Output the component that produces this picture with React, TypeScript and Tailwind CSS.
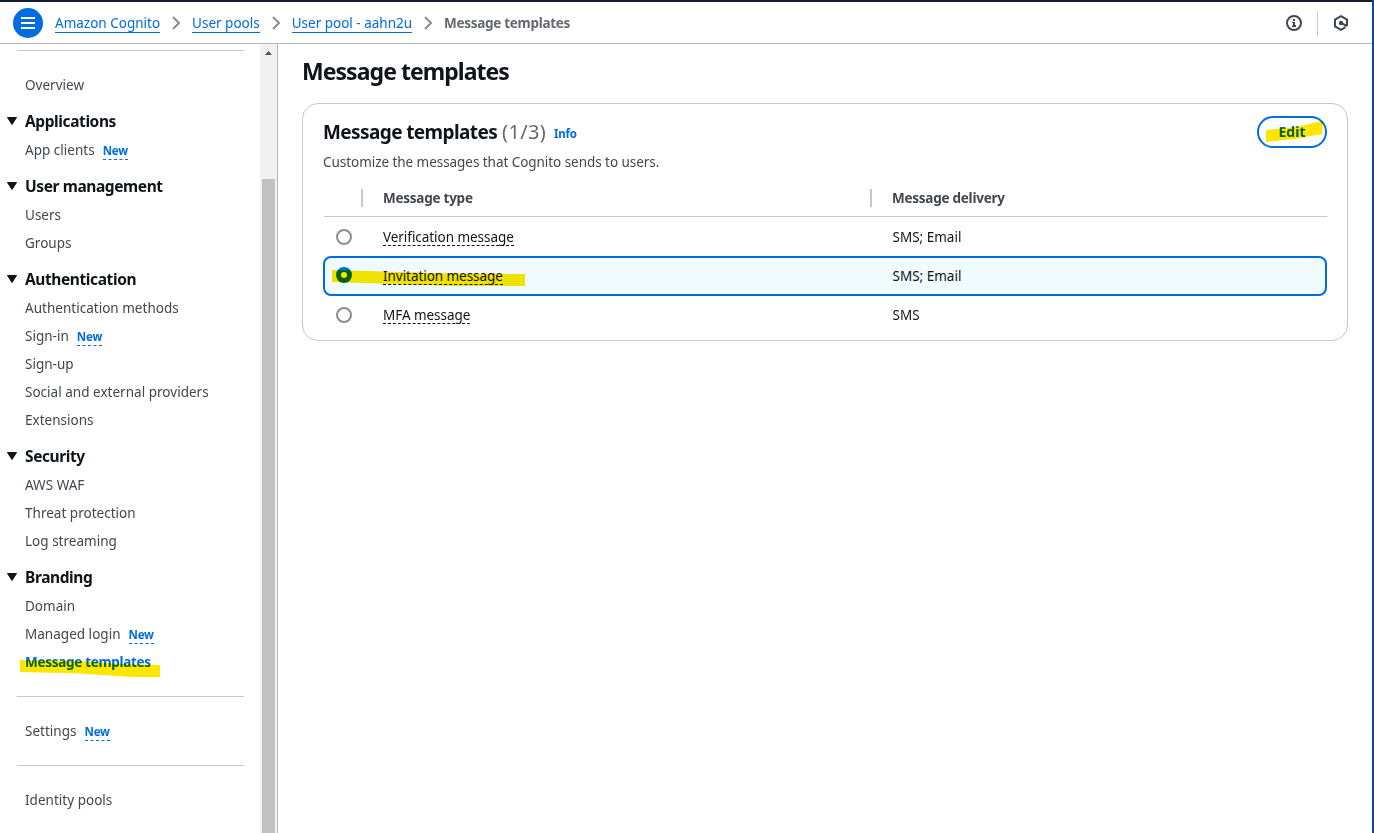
import { Fragment } from "react"

const topLinks = ["Amazon Cognito", "User pools", "User pool - aahn2u"]

const sections = [
  { title: "Applications", items: [{ label: "App clients", isNew: true }] },
  { title: "User management", items: [{ label: "Users" }, { label: "Groups" }] },
  {
    title: "Authentication",
    items: [
      { label: "Authentication methods" },
      { label: "Sign-in", isNew: true },
      { label: "Sign-up" },
      { label: "Social and external providers" },
      { label: "Extensions" },
    ],
  },
  {
    title: "Security",
    items: [{ label: "AWS WAF" }, { label: "Threat protection" }, { label: "Log streaming" }],
  },
  {
    title: "Branding",
    items: [
      { label: "Domain" },
      { label: "Managed login", isNew: true },
      { label: "Message templates", active: true },
    ],
  },
]

const rows = [
  { type: "Verification message", delivery: "SMS; Email" },
  { type: "Invitation message", delivery: "SMS; Email", selected: true },
  { type: "MFA message", delivery: "SMS" },
]

function NavItem({ label, isNew, active }: { label: string; isNew?: boolean; active?: boolean }) {
  return (
    <li className="relative flex h-7 items-center pl-[25px] text-[13.5px] leading-5 text-[#424650]">
      <a href="#" className={active ? "font-bold tracking-[-0.3px] text-[#006ce0]" : "tracking-[0.02px]"}>{label}</a>
      {isNew && (
        <span className="ml-2 mt-[2px] h-[18px] border-b border-dashed border-[#006ce0] text-[11.5px] leading-[18px] font-bold tracking-[-0.2px] text-[#006ce0]">
          New
        </span>
      )}
      {active && (
        <svg className="absolute left-5 top-[10px] mix-blend-multiply" width="140" height="20" viewBox="0 0 140 20" aria-hidden="true">
          <path d="M0 2 L60 3 L100 6 L140 7 V19 H112 L60 15.500 L0 14 Z" fill="#ffe600" />
        </svg>
      )}
    </li>
  )
}

function Divider() {
  return <hr className="my-5 ml-[17px] w-[227px] border-[#c6c6cd]" />
}

function Sidebar() {
  return (
    <aside className="flex w-[278px] shrink-0 border-r border-[#b4b4bb]">
      <nav className="w-[260px] overflow-hidden">
        <hr className="mt-[6px] mb-5 ml-[17px] w-[227px] border-[#c6c6cd]" />
        <ul>
          <NavItem label="Overview" />
        </ul>
        {sections.map((section) => (
          <div key={section.title}>
            <h3 className="flex h-[37px] items-center gap-[8px] pt-[7px] pl-[7px] text-[15.5px] font-bold tracking-[-0.4px] text-[#0f141a]">
              <svg width="10" height="8" viewBox="0 0 10 8" aria-hidden="true">
                <path d="M.5 .5 H9.500 L5 7.500 Z" fill="#0f141a" stroke="#0f141a" strokeLinejoin="round" />
              </svg>
              <span className="pt-[2px]">{section.title}</span>
            </h3>
            <ul>
              {section.items.map((item) => (
                <NavItem key={item.label} {...item} />
              ))}
            </ul>
          </div>
        ))}
        <Divider />
        <ul>
          <NavItem label="Settings" isNew />
        </ul>
        <Divider />
        <ul>
          <NavItem label="Identity pools" />
        </ul>
      </nav>
      {/* Scrollbar */}
      <div className="flex w-[17px] flex-col bg-[#f1f1f1] pl-[2px]">
        <div className="flex h-[135px] justify-center pt-[7px] pr-[2px]">
          <svg width="7" height="4" viewBox="0 0 7 4" aria-hidden="true">
            <path d="M0 4 L3.500 0 L7 4 Z" fill="#505050" />
          </svg>
        </div>
        <div className="w-[13px] flex-1 bg-[#c1c1c1]" />
      </div>
    </aside>
  )
}

function Header() {
  return (
    <header className="flex h-[44px] shrink-0 items-center border-t-2 border-b border-t-[#161d2c] border-b-[#b4b4bb] pt-px">
      <button className="ml-[13px] flex size-[30px] items-center justify-center rounded-full bg-[#006ce0] text-white">
        <svg width="14" height="12" viewBox="0 0 14 12" aria-hidden="true">
          <path d="M0 1 H14 M0 6 H14 M0 11 H14" stroke="white" strokeWidth="2" />
        </svg>
      </button>
      <nav className="ml-3 flex flex-1 items-center text-[13.5px]">
        {topLinks.map((link) => (
          <Fragment key={link}>
            <a href="#" className="mt-px h-[19px] border-b border-[#006ce0] leading-[18px] text-[#006ce0]">{link}</a>
            <svg className="mx-3" width="8" height="14" viewBox="0 0 8 14" aria-hidden="true">
              <path d="M1 1 L7 7 L1 13" fill="none" stroke="#8c8c94" strokeWidth="2" />
            </svg>
          </Fragment>
        ))}
        <span className="leading-5 font-bold tracking-[-0.3px] text-[#656871]">Message templates</span>
      </nav>
      <svg width="16" height="16" viewBox="0 0 16 16" fill="none" aria-hidden="true">
        <circle cx="8" cy="8" r="7" stroke="#424650" strokeWidth="2" />
        <path d="M7 4 H9 V6 H7 Z M6 7 H9 V10 H10 V12 H6 V10.500 H7 V8 H6 Z" fill="#424650" />
      </svg>
      <div className="mx-[15px] h-[25px] w-px bg-[#c6c6cd]" />
      <svg className="mr-[23px]" width="16" height="16" viewBox="0 0 16 16" fill="none" aria-hidden="true">
        <path d="M14 11 V4.500 L8 1.200 L2 4.500 V11.500 L8 14.800 L12.500 12.200" stroke="#424650" strokeWidth="2" />
        <circle cx="8" cy="8" r="2.200" fill="#424650" />
        <path d="M8 8 L14 11" stroke="#424650" strokeWidth="2" />
      </svg>
    </header>
  )
}

function Radio({ selected }: { selected?: boolean }) {
  return selected ? (
    <span className="-mt-[3px] size-4 rounded-full border-[5px] border-[#006ce0] bg-white" />
  ) : (
    <span className="size-4 rounded-full border-2 border-[#8c8c94] bg-white" />
  )
}

function TemplatesCard() {
  return (
    <section className="h-[238px] w-[1046px] rounded-2xl border border-[#c6c6cd] px-5 pt-3">
      <div className="flex h-8 items-center">
        <h2 className="flex gap-[5px] text-[19px] font-bold tracking-[-0.6px] text-[#0f141a]">
          Message templates <span className="text-[20px] leading-7 font-normal tracking-[0.3px] text-[#656871]">(1/3)</span>
        </h2>
        <a href="#" className="mt-[4px] ml-2 text-[11.5px] font-bold tracking-[-0.2px] text-[#006ce0]">Info</a>
        <button className="relative ml-auto h-8 w-[70px] rounded-full border-2 border-[#006ce0] pb-px text-[14px] font-bold text-[#006ce0]">
          Edit
          <svg className="absolute top-[3px] left-[7px] mix-blend-multiply" width="57" height="21" viewBox="0 0 57 21" aria-hidden="true">
            <path d="M0 9 L30 6 L56.500 0 V13 L28 18 L0 21 Z" fill="#ffe600" />
          </svg>
        </button>
      </div>
      <p className="mt-1 text-[13.5px] leading-5 tracking-[-0.05px] text-[#424650]">Customize the messages that Cognito sends to users.</p>
      <div className="mt-2 ml-px flex h-[37px] w-[1003px] items-center border-b border-[#c6c6cd] text-[13.5px] leading-5 font-bold tracking-[-0.25px] text-[#424650]">
        <div className="ml-[37px] h-[18px] w-[2px] bg-[#c6c6cd]" />
        <div className="w-[507px] pl-5">Message type</div>
        <div className="h-[18px] w-[2px] bg-[#c6c6cd]" />
        <div className="pl-5">Message delivery</div>
      </div>
      {rows.map((row) => (
        <div
          key={row.type}
          className={
            row.selected
              ? "relative -my-px flex h-10 w-[1004px] items-center rounded-lg border-2 border-[#006ce0] bg-[#f0fbff] pl-[11px] text-[13.5px] text-[#0f141a]"
              : "flex h-10 w-[1004px] items-center pl-[13px] text-[13.5px] text-[#0f141a]"
          }
        >
          <Radio selected={row.selected} />
          <div className="flex w-[540.5px] pl-[31px]">
            <span className="h-[18px] border-b border-dashed border-[#0f141a] leading-[19px] tracking-[-0.05px]">{row.type}</span>
          </div>
          <div className="leading-5">{row.delivery}</div>
          {row.selected && (
            <svg className="absolute top-[12px] left-[7px] mix-blend-multiply" width="194" height="17" viewBox="0 0 194 17" aria-hidden="true">
              <path d="M0 0 L100 3 L150 4 H193 V16 H120 L60 14 L0 12 Z" fill="#ffe600" />
            </svg>
          )}
        </div>
      ))}
    </section>
  )
}

export default function App() {
  return (
    <div className="flex h-[833px] w-[1374px] flex-col overflow-hidden border-r-2 border-[#14459b] bg-white font-['Noto_Sans','Open_Sans',sans-serif]">
      <Header />
      <div className="flex min-h-0 flex-1">
        <Sidebar />
        <main className="flex-1 pt-[11px] pl-6">
          <h1 className="mb-4 text-[23px] leading-8 font-bold tracking-[-0.95px] text-[#0f141a]">Message templates</h1>
          <TemplatesCard />
        </main>
      </div>
    </div>
  )
}
